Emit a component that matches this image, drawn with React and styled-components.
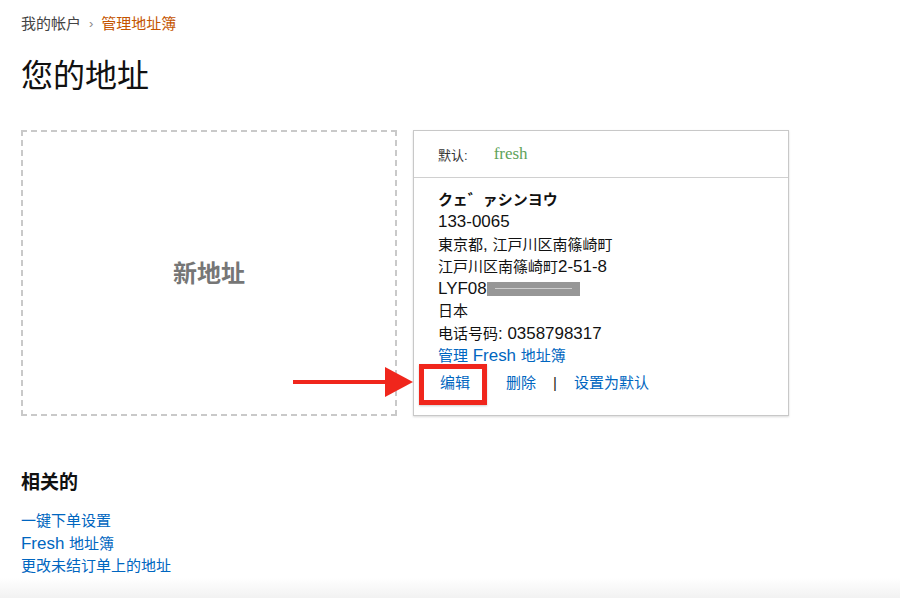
import React from "react";
import styled, { createGlobalStyle } from "styled-components";

const Global = createGlobalStyle`
  html, body { margin: 0; padding: 0; background: #fff; }
  body { font-family: "Liberation Sans", "Noto Sans CJK SC", sans-serif; color: #111; }
`;

const Page = styled.div`
  padding: 14px 21px 0;
`;

const Breadcrumb = styled.nav`
  display: flex;
  align-items: center;
  gap: 8px;
  font-size: 15px;
  line-height: 20px;
  color: #444;
`;

const Crumb = styled.span`
  color: ${(p) => (p.$active ? "#c45500" : "#444")};
`;

const Sep = styled.span`
  color: #888;
  font-size: 13px;
`;

const Title = styled.h1`
  margin: 23px 0 0;
  font-size: 32px;
  line-height: 38px;
  font-weight: 400;
  color: #111;
`;

const CardRow = styled.div`
  position: relative;
  display: flex;
  gap: 16px;
  margin-top: 35px;
`;

const NewCard = styled.div`
  box-sizing: border-box;
  width: 376px;
  height: 286px;
  border: 2px dashed #c9c9c9;
  display: flex;
  align-items: center;
  justify-content: center;
  padding-bottom: 4px;
  font-size: 24px;
  font-weight: 700;
  color: #767676;
`;

const AddrCard = styled.div`
  box-sizing: border-box;
  width: 376px;
  height: 286px;
  border: 1px solid #c8c8c8;
  box-shadow: 0 1px 2px rgba(0, 0, 0, 0.15);
  display: flex;
  flex-direction: column;
`;

const CardHeader = styled.div`
  display: flex;
  align-items: center;
  gap: 26px;
  height: 46px;
  padding: 0 24px;
  border-bottom: 1px solid #d0d0d0;
  font-size: 13px;
  color: #333;
`;

const Brand = styled.span`
  font-family: "Liberation Serif", serif;
  font-size: 17px;
  color: #5fa35a;
`;

const CardBody = styled.div`
  padding: 11px 24px 0;
  font-size: 15px;
  line-height: 22.3px;
  color: #111;
`;

const Line = styled.div`
  font-weight: ${(p) => (p.$bold ? 700 : 400)};
  display: flex;
  align-items: center;
  white-space: pre;
`;

const Latin = styled.span`
  font-size: 1.13em;
`;

const Redact = styled.span`
  display: inline-block;
  width: 93px;
  height: 14px;
  background: #979797;
  position: relative;
  &::after {
    content: "";
    position: absolute;
    left: 8px;
    right: 8px;
    top: 6px;
    height: 1px;
    background: #cfcfcf;
  }
`;

const Link = styled.a`
  color: #0066c0;
  text-decoration: none;
  cursor: pointer;
  white-space: pre;
`;

const Actions = styled.div`
  display: flex;
  align-items: center;
  margin-top: 5px;
  padding-left: 2px;
  font-size: 15px;
  line-height: 22px;
`;

const Pipe = styled.span`
  color: #222;
  margin: 0 ${(p) => p.$gap || 0}px;
`;

const Spacer = styled.span`
  display: inline-block;
  width: ${(p) => p.$w}px;
`;

const Highlight = styled.div`
  position: absolute;
  left: 398px;
  top: 234px;
  width: 68px;
  height: 41px;
  box-sizing: border-box;
  border: 5px solid #f0261c;
  box-shadow: 0 1px 2px rgba(0, 0, 0, 0.2);
  pointer-events: none;
`;

const Arrow = styled.svg`
  position: absolute;
  left: 272px;
  top: 236px;
  pointer-events: none;
`;

const Related = styled.section`
  margin-top: 55px;
`;

const RelatedTitle = styled.h2`
  margin: 0;
  font-size: 19px;
  line-height: 24px;
  font-weight: 700;
  color: #111;
`;

const LinkList = styled.div`
  display: flex;
  flex-direction: column;
  align-items: flex-start;
  margin-top: 15px;
  font-size: 15px;
  line-height: 22.5px;
`;

const Footer = styled.div`
  height: 24px;
  background: linear-gradient(to bottom, #ffffff, #efefef);
`;

export default function App() {
  return (
    <>
      <Global />
      <Page>
        <Breadcrumb>
          <Crumb>我的帐户</Crumb>
          <Sep>›</Sep>
          <Crumb $active>管理地址簿</Crumb>
        </Breadcrumb>
        <Title>您的地址</Title>
        <CardRow>
          <NewCard>新地址</NewCard>
          <AddrCard>
            <CardHeader>
              <span>默认:</span>
              <Brand>fresh</Brand>
            </CardHeader>
            <CardBody>
              <Line $bold>クェ゛ァシンヨウ</Line>
              <Line>
                <Latin>133-0065</Latin>
              </Line>
              <Line>
                東京都<Latin>, </Latin>江戸川区南篠崎町
              </Line>
              <Line>
                江戸川区南篠崎町<Latin>2-51-8</Latin>
              </Line>
              <Line>
                <Latin>LYF08</Latin>
                <Redact />
              </Line>
              <Line>日本</Line>
              <Line>
                电话号码<Latin>: 0358798317</Latin>
              </Line>
              <Line>
                <Link>
                  管理<Latin> Fresh </Latin>地址簿
                </Link>
              </Line>
              <Actions>
                <Link>编辑</Link>
                <Spacer $w={36} />
                <Link>删除</Link>
                <Pipe $gap={17}>|</Pipe>
                <Link>设置为默认</Link>
              </Actions>
            </CardBody>
          </AddrCard>
          <Arrow width="122" height="32" viewBox="0 0 122 32">
            <rect x="0" y="14" width="94" height="4" fill="#f0261c" />
            <polygon points="92,1 120,16 92,31" fill="#f0261c" />
          </Arrow>
          <Highlight />
        </CardRow>
        <Related>
          <RelatedTitle>相关的</RelatedTitle>
          <LinkList>
            <Link>一键下单设置</Link>
            <Link>
              <Latin>Fresh </Latin>地址簿
            </Link>
            <Link>更改未结订单上的地址</Link>
          </LinkList>
        </Related>
      </Page>
      <Footer />
    </>
  );
}
